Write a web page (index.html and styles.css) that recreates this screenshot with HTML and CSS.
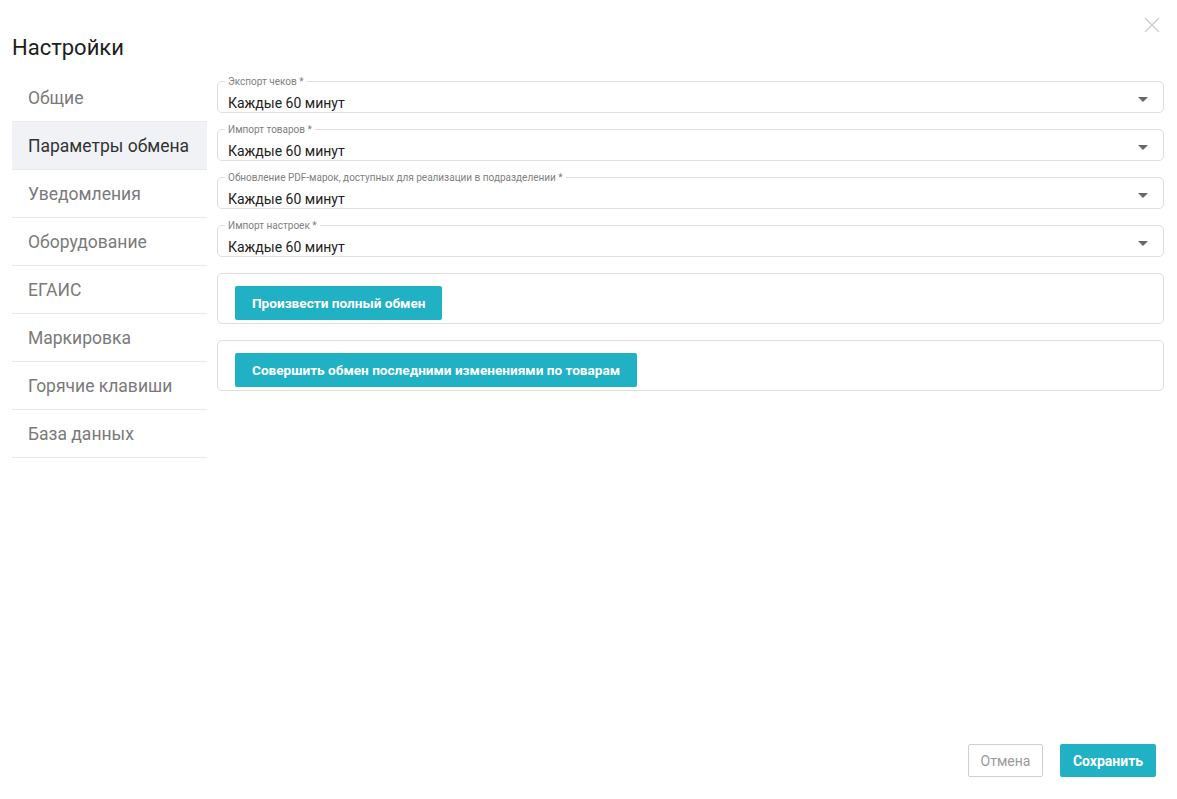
FILE: index.html
```html
<!DOCTYPE html>
<html lang="ru">

<head>
     <meta charset="UTF-8" />
     <title>Настройки</title>
     <meta name="viewport" content="width=device-width, initial-scale=1" />
     <link rel="stylesheet" href="styles.css">
</head>

<body>
     <div class="modal">
          <span class="close" title="Закрыть">
               <svg width="16" height="16" viewBox="0 0 16 16">
                    <path d="M1 1L15 15M15 1L1 15" stroke="#cfcfcf" stroke-width="1.4" fill="none" />
               </svg>
          </span>

          <h1 class="title">Настройки</h1>

          <div class="main">
               <ul class="menu">
                    <li>Общие</li>
                    <li class="active">Параметры обмена</li>
                    <li>Уведомления</li>
                    <li>Оборудование</li>
                    <li>ЕГАИС</li>
                    <li>Маркировка</li>
                    <li>Горячие клавиши</li>
                    <li>База данных</li>
               </ul>

               <div class="content">
                    <div class="field">
                         <span class="label">Экспорт чеков *</span>
                         <span class="value">Каждые 60 минут</span>
                         <span class="arrow"></span>
                    </div>
                    <div class="field">
                         <span class="label">Импорт товаров *</span>
                         <span class="value">Каждые 60 минут</span>
                         <span class="arrow"></span>
                    </div>
                    <div class="field">
                         <span class="label">Обновление PDF-марок, доступных для реализации в подразделении *</span>
                         <span class="value">Каждые 60 минут</span>
                         <span class="arrow"></span>
                    </div>
                    <div class="field">
                         <span class="label">Импорт настроек *</span>
                         <span class="value">Каждые 60 минут</span>
                         <span class="arrow"></span>
                    </div>

                    <div class="card">
                         <button class="btn">Произвести полный обмен</button>
                    </div>
                    <div class="card">
                         <button class="btn">Совершить обмен последними изменениями по товарам</button>
                    </div>
               </div>
          </div>

          <div class="footer">
               <button class="cancel-btn">Отмена</button>
               <button class="save-btn">Сохранить</button>
          </div>
     </div>
</body>

</html>
```

FILE: styles.css
```css
:root {
     --primary: #20b1c5;
     --border: #dedede;
     --muted: #7a7a7a;
     --text: #222;
}

* {
     box-sizing: border-box;
     margin: 0;
     padding: 0;
}

body {
     font-family: Roboto, 'Liberation Sans', sans-serif;
     background: white;
     color: var(--text);
}

.modal {
     position: relative;
     height: 100vh;
     display: flex;
     flex-direction: column;
     padding: 0 13px 0 12px;
}

.close {
     position: absolute;
     top: 17px;
     right: 17px;
     cursor: pointer;
}

.title {
     margin-top: 34px;
     font-size: 22px;
     line-height: 28px;
     font-weight: 400;
     color: #1e1e1e;
}

.main {
     display: flex;
     gap: 10px;
     margin-top: 12px;
}

.menu {
     list-style: none;
     width: 195px;
     flex-shrink: 0;
}

.menu li {
     height: 48px;
     line-height: 48px;
     padding-left: 16px;
     font-size: 17.5px;
     color: var(--muted);
     border-bottom: 1px solid #e9e9e9;
     cursor: pointer;
}

.menu li.active {
     background: #f0f2f5;
     color: #333;
}

.content {
     flex: 1;
     padding-top: 7px;
     display: flex;
     flex-direction: column;
     gap: 16px;
}

.field {
     position: relative;
     height: 32px;
     border: 1px solid var(--border);
     border-radius: 5px;
     padding: 11px 10px 0;
}

.field .label {
     position: absolute;
     top: -6px;
     left: 7px;
     padding: 0 3px;
     background: white;
     font-size: 10px;
     line-height: 11px;
     color: #808080;
}

.field .value {
     display: block;
     font-size: 14px;
     line-height: 20px;
     color: #222;
}

.field .arrow {
     position: absolute;
     top: 15px;
     right: 15px;
     border-left: 5px solid transparent;
     border-right: 5px solid transparent;
     border-top: 5px solid #666;
}

.card {
     border: 1px solid var(--border);
     border-radius: 5px;
     padding: 12px 17px 3px;
}

.btn {
     height: 34px;
     padding: 0 17px;
     background: var(--primary);
     color: white;
     border: none;
     border-radius: 2px;
     font-family: inherit;
     font-size: 13.6px;
     font-weight: 700;
     cursor: pointer;
}

.footer {
     margin-top: auto;
     display: flex;
     justify-content: flex-end;
     gap: 17px;
     padding: 0 8px 22px 0;
}

.cancel-btn,
.save-btn {
     height: 33px;
     font-family: inherit;
     font-size: 14px;
     border-radius: 2px;
     cursor: pointer;
}

.cancel-btn {
     width: 75px;
     background: white;
     color: #9a9a9a;
     border: 1px solid #cfcfcf;
}

.save-btn {
     width: 96px;
     background: var(--primary);
     color: white;
     border: none;
     font-weight: 700;
}
```
